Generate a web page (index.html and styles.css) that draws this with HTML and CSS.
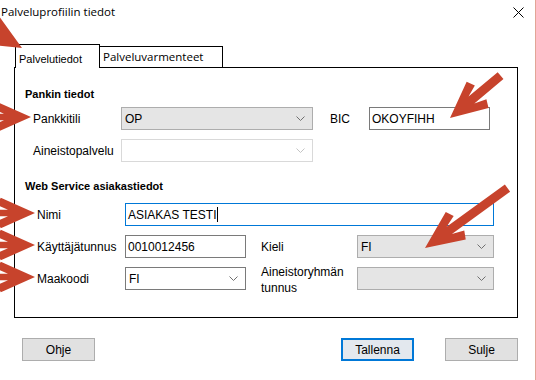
FILE: index.html
```html
<!DOCTYPE html>
<html lang="fi">
  <head>
    <meta charset="UTF-8" />
    <meta name="viewport" content="width=device-width, initial-scale=1.0" />
    <title>Palveluprofiilin tiedot</title>
    <link rel="stylesheet" href="styles.css">
  </head>
  <body>
    <div class="window">
      <div class="titlebar">
        <span class="title">Palveluprofiilin tiedot</span>
        <svg class="close" width="11" height="11" viewBox="0 0 11 11">
          <path d="M0.5 0.5 L10.5 10.5 M10.5 0.5 L0.5 10.5" stroke="#000" stroke-width="1" fill="none" />
        </svg>
      </div>

      <div class="tabs">
        <div class="tab active">Palvelutiedot</div>
        <div class="tab">Palveluvarmenteet</div>
      </div>

      <div class="panel">
        <div class="section-title">Pankin tiedot</div>
        <div class="form bank-form">
          <span class="label">Pankkitili</span>
          <div class="combo grey">
            <span>OP</span>
            <svg class="chev" width="9" height="5" viewBox="0 0 9 5"><path d="M0.5 0.5 L4.5 4.5 L8.5 0.5" /></svg>
          </div>
          <span class="label bic-label">BIC</span>
          <div class="textbox">OKOYFIHH</div>

          <span class="label">Aineistopalvelu</span>
          <div class="combo disabled">
            <span></span>
            <svg class="chev" width="9" height="5" viewBox="0 0 9 5"><path d="M0.5 0.5 L4.5 4.5 L8.5 0.5" /></svg>
          </div>
        </div>

        <div class="section-title ws-title">Web Service asiakastiedot</div>
        <div class="form ws-form">
          <span class="label">Nimi</span>
          <div class="textbox focus name-box">ASIAKAS TESTI<span class="caret"></span></div>

          <span class="label">Käyttäjätunnus</span>
          <div class="textbox">0010012456</div>
          <span class="label right-label">Kieli</span>
          <div class="combo grey right-field">
            <span>FI</span>
            <svg class="chev" width="9" height="5" viewBox="0 0 9 5"><path d="M0.5 0.5 L4.5 4.5 L8.5 0.5" /></svg>
          </div>

          <span class="label">Maakoodi</span>
          <div class="combo">
            <span>FI</span>
            <svg class="chev" width="9" height="5" viewBox="0 0 9 5"><path d="M0.5 0.5 L4.5 4.5 L8.5 0.5" /></svg>
          </div>
          <span class="label right-label two-line">Aineistoryhmän<br>tunnus</span>
          <div class="combo grey right-field">
            <span></span>
            <svg class="chev" width="9" height="5" viewBox="0 0 9 5"><path d="M0.5 0.5 L4.5 4.5 L8.5 0.5" /></svg>
          </div>
        </div>
      </div>

      <div class="buttons">
        <button type="button" class="help">Ohje</button>
        <button type="button" class="default">Tallenna</button>
        <button type="button">Sulje</button>
      </div>

      <!-- red callout arrows drawn over the dialog -->
      <svg class="arrows" width="536" height="380" viewBox="0 0 536 380">
        <g fill="#c7432c">
          <path transform="translate(22 48) rotate(30) scale(0.95)" d="M0 0 L-38 -17 L-42 -9 L-30 -4.5 L-60 -4.5 L-60 4.5 L-30 4.5 L-42 9 L-38 17 Z" />
          <path transform="translate(31 117) scale(0.9)" d="M0 0 L-38 -17 L-42 -9 L-30 -3.5 L-70 -3.5 L-70 3.5 L-30 3.5 L-42 9 L-38 17 Z" />
          <path transform="translate(35 213) scale(0.9)" d="M0 0 L-38 -17 L-42 -9 L-30 -3.5 L-70 -3.5 L-70 3.5 L-30 3.5 L-42 9 L-38 17 Z" />
          <path transform="translate(35 245) scale(0.9)" d="M0 0 L-38 -17 L-42 -9 L-30 -3.5 L-70 -3.5 L-70 3.5 L-30 3.5 L-42 9 L-38 17 Z" />
          <path transform="translate(35 277) scale(0.9)" d="M0 0 L-38 -17 L-42 -9 L-30 -3.5 L-70 -3.5 L-70 3.5 L-30 3.5 L-42 9 L-38 17 Z" />
          <path transform="translate(450 118) rotate(140)" d="M0 0 L-36 -17 L-40 -9 L-28 -4.5 L-66 -4.5 L-66 4.5 L-28 4.5 L-40 9 L-36 17 Z" />
          <path transform="translate(425 248) rotate(144)" d="M0 0 L-38 -17 L-42 -9 L-30 -4.5 L-102 -4.5 L-102 4.5 L-30 4.5 L-42 9 L-38 17 Z" />
        </g>
      </svg>
    </div>
  </body>
</html>
```

FILE: styles.css
```css
body {
  margin: 0;
  padding: 0;
  font-family: "Liberation Sans", Arial, sans-serif;
  font-size: 12px;
  color: #000;
  background-color: #fff;
}

.window {
  position: relative;
  width: 536px;
  height: 380px;
  box-sizing: border-box;
  border-right: 1px solid #e2a596;
  overflow: hidden;
}

.titlebar {
  display: flex;
  justify-content: space-between;
  align-items: flex-start;
  height: 44px;
  padding: 4px 11px 0 1px;
  box-sizing: border-box;
}

.title {
  font-family: "Open Sans", sans-serif;
  font-size: 11.5px;
  line-height: 16px;
}

.close {
  margin-top: 3px;
}

.tabs {
  display: flex;
  align-items: flex-end;
  height: 23px;
  margin-left: 15px;
}

.tab {
  box-sizing: border-box;
  border-top: 1px solid #000;
  border-right: 1px solid #000;
  padding-left: 3px;
  background-color: #fff;
}

.tab.active {
  position: relative;
  z-index: 1;
  width: 85px;
  height: 24px;
  margin-bottom: -1px;
  border-left: 1px solid #000;
  font-size: 11px;
  line-height: 28px;
}

.tab:not(.active) {
  width: 123px;
  height: 21px;
  font-family: "Open Sans", sans-serif;
  font-size: 11.5px;
  line-height: 20px;
}

.panel {
  width: 504px;
  height: 251px;
  margin-left: 14px;
  box-sizing: border-box;
  border: 1px solid #000;
  padding: 19px 0 0 10px;
}

.section-title {
  font-weight: bold;
  font-size: 11px;
  line-height: 14px;
}

.ws-title {
  margin-top: 17px;
}

.form {
  display: grid;
  grid-auto-rows: 23px;
  row-gap: 9px;
  align-items: center;
}

.bank-form {
  margin: 6px 0 0 8px;
  grid-template-columns: 88px 192px 17px 39px 121px;
}

.bank-form .combo {
  grid-column: 2;
}

.bank-form .bic-label {
  grid-column: 4;
}

.bank-form .textbox {
  grid-column: 5;
}

.ws-form {
  margin: 10px 0 0 12px;
  grid-template-columns: 88px 121px 15px 96px 137px;
}

.ws-form .name-box {
  grid-column: 2 / 6;
}

.ws-form .right-label {
  grid-column: 4;
}

.ws-form .right-field {
  grid-column: 5;
}

.label {
  grid-column: 1;
  white-space: nowrap;
}

.two-line {
  align-self: start;
  height: 23px;
  margin-top: -3px;
  line-height: 16px;
}

.textbox,
.combo {
  display: flex;
  align-items: center;
  height: 23px;
  box-sizing: border-box;
  border: 1px solid #7a7a7a;
  background-color: #fff;
  padding-left: 2px;
}

.textbox.focus {
  border-color: #0078d7;
}

.caret {
  display: inline-block;
  width: 1px;
  height: 15px;
  margin-left: 1px;
  background-color: #000;
}

.combo {
  justify-content: space-between;
  padding: 0 7px 0 3px;
}

.combo.grey {
  background-color: #e5e5e5;
  border-color: #adadad;
}

.combo.disabled {
  border-color: #d9d9d9;
}

.chev path {
  fill: none;
  stroke: #707070;
  stroke-width: 1;
}

.combo.disabled .chev path {
  stroke: #c4c4c4;
}

.buttons {
  display: flex;
  gap: 31px;
  margin-top: 20px;
  padding: 0 17px 0 22px;
}

.buttons button {
  width: 73px;
  height: 23px;
  box-sizing: border-box;
  border: 1px solid #adadad;
  background-color: #e1e1e1;
  font-family: "Liberation Sans", Arial, sans-serif;
  font-size: 12px;
  color: #000;
  padding: 0;
}

.buttons .help {
  margin-right: auto;
}

.buttons .default {
  border: 2px solid #0078d7;
  background-color: #e3e8ee;
}

.arrows {
  position: absolute;
  top: 0;
  left: 0;
  z-index: 2;
  pointer-events: none;
}
```
